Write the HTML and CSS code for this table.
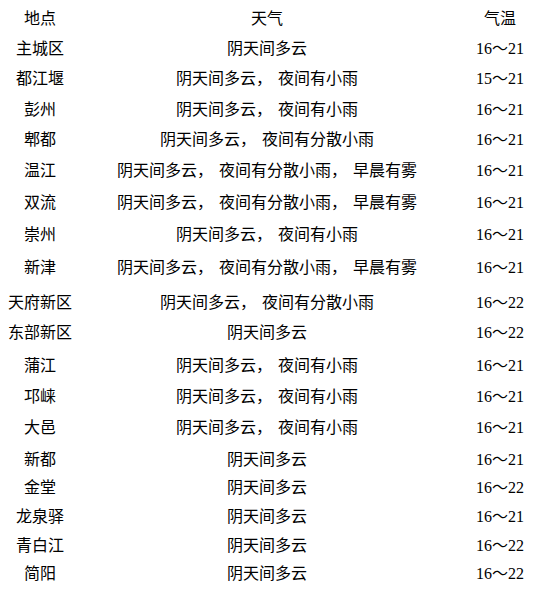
FILE: index.html
```html
<!DOCTYPE html>
<html lang="zh-CN">
<head>
<meta charset="utf-8">
<title>天气</title>
<link rel="stylesheet" href="styles.css">
</head>
<body>
<table class="weather">
  <colgroup>
    <col class="c-place">
    <col class="c-desc">
    <col class="c-temp">
  </colgroup>
  <tr class="h30"><td>地点</td><td>天气</td><td>气温</td></tr>
  <tr class="h30"><td>主城区</td><td>阴天间多云</td><td>16～21</td></tr>
  <tr class="h31"><td>都江堰</td><td>阴天间多云<span class="cm">，</span>夜间有小雨</td><td>15～21</td></tr>
  <tr class="h30"><td>彭州</td><td>阴天间多云<span class="cm">，</span>夜间有小雨</td><td>16～21</td></tr>
  <tr class="h31"><td>郫都</td><td>阴天间多云<span class="cm">，</span>夜间有分散小雨</td><td>16～21</td></tr>
  <tr class="h32"><td>温江</td><td>阴天间多云<span class="cm">，</span>夜间有分散小雨<span class="cm">，</span>早晨有雾</td><td>16～21</td></tr>
  <tr class="h32"><td>双流</td><td>阴天间多云<span class="cm">，</span>夜间有分散小雨<span class="cm">，</span>早晨有雾</td><td>16～21</td></tr>
  <tr class="h33"><td>崇州</td><td>阴天间多云<span class="cm">，</span>夜间有小雨</td><td>16～21</td></tr>
  <tr class="h35"><td>新津</td><td>阴天间多云<span class="cm">，</span>夜间有分散小雨<span class="cm">，</span>早晨有雾</td><td>16～21</td></tr>
  <tr class="h30"><td>天府新区</td><td>阴天间多云<span class="cm">，</span>夜间有分散小雨</td><td>16～22</td></tr>
  <tr class="h33"><td>东部新区</td><td>阴天间多云</td><td>16～22</td></tr>
  <tr class="h31"><td>蒲江</td><td>阴天间多云<span class="cm">，</span>夜间有小雨</td><td>16～21</td></tr>
  <tr class="h31"><td>邛崃</td><td>阴天间多云<span class="cm">，</span>夜间有小雨</td><td>16～21</td></tr>
  <tr class="h32"><td>大邑</td><td>阴天间多云<span class="cm">，</span>夜间有小雨</td><td>16～21</td></tr>
  <tr class="h28"><td>新都</td><td>阴天间多云</td><td>16～21</td></tr>
  <tr class="h29"><td>金堂</td><td>阴天间多云</td><td>16～22</td></tr>
  <tr class="h29"><td>龙泉驿</td><td>阴天间多云</td><td>16～21</td></tr>
  <tr class="h28"><td>青白江</td><td>阴天间多云</td><td>16～22</td></tr>
  <tr class="h34"><td>简阳</td><td>阴天间多云</td><td>16～22</td></tr>
</table>
</body>
</html>
```

FILE: styles.css
```css
html, body {
  margin: 0;
  padding: 0;
  background: #ffffff;
}

.weather {
  width: 546px;
  border-collapse: collapse;
  border-spacing: 0;
  table-layout: fixed;
  font-family: "Liberation Serif", "Noto Sans CJK SC", serif;
  font-size: 16px;
  line-height: 16px;
  color: #000000;
}

.c-place { width: 80px; }
.c-desc { width: 374px; }
.c-temp { width: 92px; }

.weather td {
  padding: 11px 0 0 0;
  text-align: center;
  vertical-align: top;
  white-space: nowrap;
}

.cm { padding-right: 6px; }

.h28 { height: 28px; }
.h29 { height: 29px; }
.h30 { height: 30px; }
.h31 { height: 31px; }
.h32 { height: 32px; }
.h33 { height: 33px; }
.h34 { height: 34px; }
.h35 { height: 35px; }
```
